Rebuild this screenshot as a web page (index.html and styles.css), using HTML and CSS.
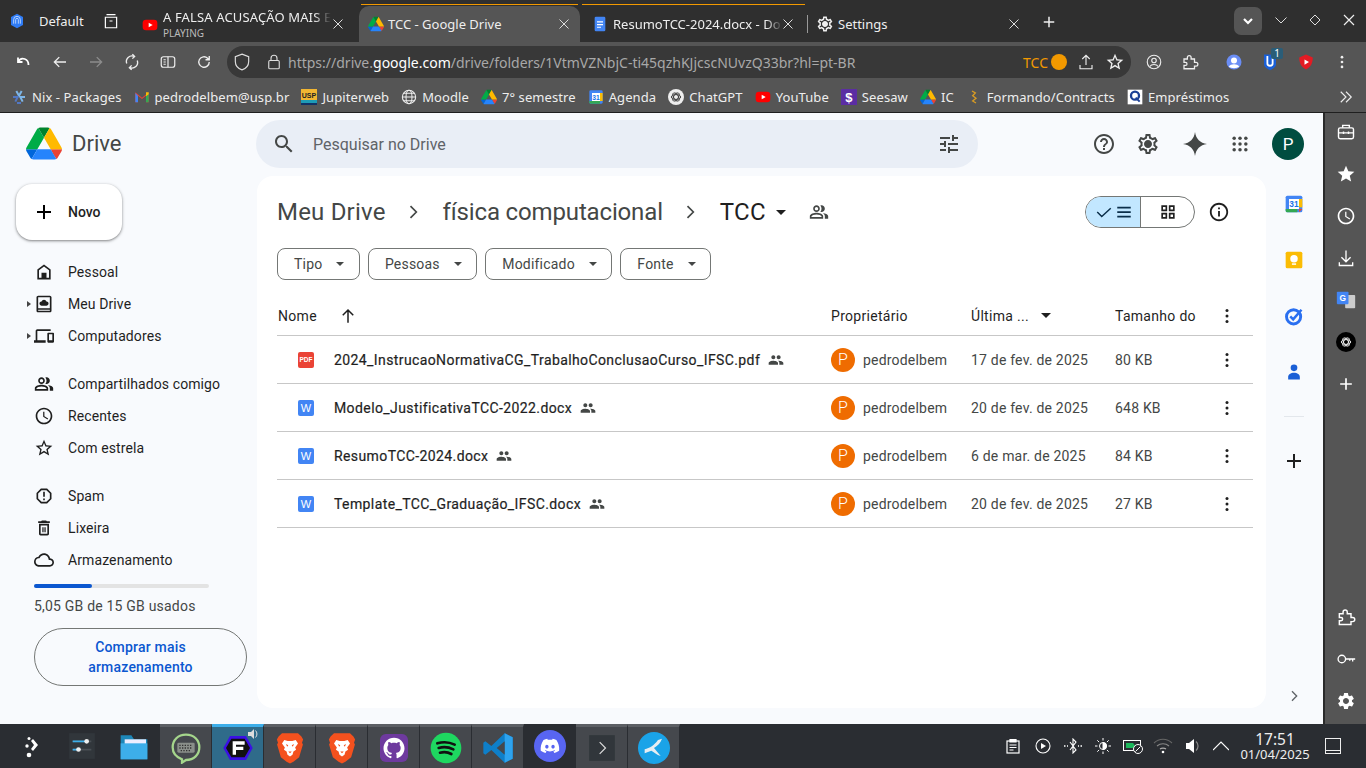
FILE: index.html
```html
<!DOCTYPE html>
<html lang="pt-BR">
<head>
    <meta charset="UTF-8">
    <title>TCC - Google Drive</title>
    <link rel="stylesheet" href="styles.css">
</head>
<body>
    <svg class="sprite" width="0" height="0">
        <symbol id="drive" viewBox="0 0 87.3 78">
            <path d="m6.6 66.85 3.85 6.65c.8 1.4 1.95 2.5 3.3 3.3l13.75-23.8h-27.5c0 1.55.4 3.1 1.2 4.5z" fill="#0066da"/>
            <path d="m43.65 25-13.75-23.8c-1.35.8-2.5 1.9-3.3 3.3l-25.4 44a9.06 9.06 0 0 0 -1.2 4.5h27.5z" fill="#00ac47"/>
            <path d="m73.55 76.8c1.35-.8 2.5-1.9 3.3-3.3l1.6-2.75 7.65-13.25c.8-1.4 1.2-2.95 1.2-4.5h-27.502l5.852 11.5z" fill="#ea4335"/>
            <path d="m43.65 25 13.75-23.8c-1.35-.8-2.9-1.2-4.5-1.2h-18.5c-1.6 0-3.15.45-4.5 1.2z" fill="#00832d"/>
            <path d="m59.8 53h-32.3l-13.75 23.8c1.35.8 2.9 1.2 4.5 1.2h50.8c1.6 0 3.15-.45 4.5-1.2z" fill="#2684fc"/>
            <path d="m73.4 26.5-12.7-22c-.8-1.4-1.95-2.5-3.3-3.3l-13.75 23.8 16.15 28h27.45c0-1.55-.4-3.1-1.2-4.5z" fill="#ffba00"/>
        </symbol>
        <symbol id="yt" viewBox="0 0 24 24"><rect x="1" y="4" width="22" height="16" rx="5" fill="#f00"/><path d="M10 8.5l6 3.5-6 3.5z" fill="#fff"/></symbol>
        <symbol id="close" viewBox="0 0 12 12"><path d="M1.5 1.5l9 9M10.5 1.5l-9 9" fill="none" stroke="currentColor"/></symbol>
        <symbol id="home" viewBox="0 0 24 24"><path d="M12 3L4 9v12h16V9l-8-6zm6 16h-3v-6H9v6H6v-9l6-4.5 6 4.5v9z"/></symbol>
        <symbol id="mydrive" viewBox="0 0 24 24"><path d="M19 2H5c-1.1 0-2 .9-2 2v16c0 1.1.9 2 2 2h14c1.1 0 2-.9 2-2V4c0-1.1-.9-2-2-2zM5 4h14v13H5V4zm0 16v-1h14v1H5z"/><path d="M9 14a2.5 2.5 0 0 1 0-5 3.2 3.2 0 0 1 6 0 2.5 2.5 0 0 1 0 5z"/></symbol>
        <symbol id="computer" viewBox="0 0 24 24"><path d="M4 6h16V4H4c-1.1 0-2 .9-2 2v11H0v3h14v-3H4V6zm19 2h-6c-.55 0-1 .45-1 1v10c0 .55.45 1 1 1h6c.55 0 1-.45 1-1V9c0-.55-.45-1-1-1zm-1 9h-4v-7h4v7z"/></symbol>
        <symbol id="people" viewBox="0 0 24 24"><path d="M16.67 13.13C18.04 14.06 19 15.32 19 17v3h4v-3c0-2.18-3.57-3.47-6.33-3.87zM15 12c2.21 0 4-1.79 4-4s-1.79-4-4-4c-.47 0-.91.1-1.33.24C14.5 5.27 15 6.58 15 8s-.5 2.73-1.33 3.76c.42.14.86.24 1.33.24zM9 12c2.21 0 4-1.79 4-4s-1.79-4-4-4-4 1.79-4 4 1.79 4 4 4zm0-6c1.1 0 2 .9 2 2s-.9 2-2 2-2-.9-2-2 .9-2 2-2zm0 7c-2.67 0-8 1.34-8 4v3h16v-3c0-2.66-5.33-4-8-4zm6 5H3v-.99C3.2 16.29 6.3 15 9 15s5.8 1.29 6 2v1z"/></symbol>
        <symbol id="peoplefill" viewBox="0 0 24 24"><path d="M16 11c1.66 0 2.99-1.34 2.99-3S17.66 5 16 5c-1.66 0-3 1.34-3 3s1.34 3 3 3zm-8 0c1.66 0 2.99-1.34 2.99-3S9.66 5 8 5C6.34 5 5 6.34 5 8s1.34 3 3 3zm0 2c-2.33 0-7 1.17-7 3.5V19h14v-2.5c0-2.33-4.67-3.5-7-3.5zm8 0c-.29 0-.62.02-.97.05 1.16.84 1.97 1.97 1.97 3.45V19h6v-2.5c0-2.33-4.67-3.5-7-3.5z"/></symbol>
        <symbol id="clock" viewBox="0 0 24 24"><path d="M11.99 2C6.47 2 2 6.48 2 12s4.47 10 9.99 10C17.52 22 22 17.52 22 12S17.52 2 11.99 2zM12 20c-4.42 0-8-3.58-8-8s3.58-8 8-8 8 3.58 8 8-3.58 8-8 8zm.5-13H11v6l5.25 3.15.75-1.23-4.5-2.67z"/></symbol>
        <symbol id="star" viewBox="0 0 24 24"><path d="M22 9.24l-7.19-.62L12 2 9.19 8.63 2 9.24l5.46 4.73L5.82 21 12 17.27 18.18 21l-1.63-7.03L22 9.24zM12 15.4l-3.76 2.27 1-4.28-3.32-2.88 4.38-.38L12 6.1l1.71 4.04 4.38.38-3.32 2.88 1 4.28L12 15.4z"/></symbol>
        <symbol id="starfill" viewBox="0 0 24 24"><path d="M12 17.27L18.18 21l-1.64-7.03L22 9.24l-7.19-.61L12 2 9.19 8.63 2 9.24l5.46 4.73L5.82 21z"/></symbol>
        <symbol id="spam" viewBox="0 0 24 24"><path d="M15.73 3H8.27L3 8.27v7.46L8.27 21h7.46L21 15.73V8.27L15.73 3zM19 14.9L14.9 19H9.1L5 14.9V9.1L9.1 5h5.8L19 9.1v5.8zM11 7h2v6h-2zM11 15h2v2h-2z"/></symbol>
        <symbol id="trash" viewBox="0 0 24 24"><path d="M6 19c0 1.1.9 2 2 2h8c1.1 0 2-.9 2-2V7H6v12zM8 9h8v10H8V9zm7.5-5l-1-1h-5l-1 1H5v2h14V4zM10 11h1.5v6H10zM12.5 11H14v6h-1.5z"/></symbol>
        <symbol id="cloud" viewBox="0 0 24 24"><path d="M19.35 10.04C18.67 6.59 15.64 4 12 4 9.11 4 6.6 5.64 5.35 8.04 2.34 8.36 0 10.91 0 14c0 3.31 2.69 6 6 6h13c2.76 0 5-2.24 5-5 0-2.64-2.05-4.78-4.65-4.96zM19 18H6c-2.21 0-4-1.79-4-4 0-2.05 1.53-3.76 3.56-3.97l1.07-.11.5-.95C8.08 7.14 9.94 6 12 6c2.62 0 4.88 1.86 5.39 4.43l.3 1.5 1.53.11c1.56.1 2.78 1.41 2.78 2.96 0 1.65-1.35 3-3 3z"/></symbol>
        <symbol id="search" viewBox="0 0 24 24"><path d="M15.5 14h-.79l-.28-.27C15.41 12.59 16 11.11 16 9.5 16 5.91 13.09 3 9.5 3S3 5.91 3 9.5 5.91 16 9.5 16c1.61 0 3.09-.59 4.23-1.57l.27.28v.79l5 4.99L20.49 19l-4.99-5zm-6 0C7.01 14 5 11.99 5 9.5S7.01 5 9.5 5 14 7.01 14 9.5 11.99 14 9.5 14z"/></symbol>
        <symbol id="tune" viewBox="0 0 24 24"><path d="M3 17v2h6v-2H3zM3 5v2h10V5H3zm10 16v-2h8v-2h-8v-2h-2v6h2zM7 9v2H3v2h4v2h2V9H7zm14 4v-2H11v2h10zm-6-4h2V7h4V5h-4V3h-2v6z"/></symbol>
        <symbol id="help" viewBox="0 0 24 24"><path d="M11 18h2v-2h-2v2zm1-16C6.48 2 2 6.48 2 12s4.48 10 10 10 10-4.48 10-10S17.52 2 12 2zm0 18c-4.41 0-8-3.59-8-8s3.59-8 8-8 8 3.59 8 8-3.59 8-8 8zm0-14c-2.21 0-4 1.79-4 4h2c0-1.1.9-2 2-2s2 .9 2 2c0 2-3 1.75-3 5h2c0-2.25 3-2.5 3-5 0-2.21-1.79-4-4-4z"/></symbol>
        <symbol id="gear" viewBox="0 0 24 24"><path d="M19.43 12.98c.04-.32.07-.64.07-.98 0-.34-.03-.66-.07-.98l2.11-1.65c.19-.15.24-.42.12-.64l-2-3.46c-.09-.16-.26-.25-.44-.25-.06 0-.12.01-.17.03l-2.49 1c-.52-.4-1.08-.73-1.69-.98l-.38-2.65C14.46 2.18 14.25 2 14 2h-4c-.25 0-.46.18-.49.42l-.38 2.65c-.61.25-1.17.59-1.69.98l-2.49-1c-.06-.02-.12-.03-.18-.03-.17 0-.34.09-.43.25l-2 3.46c-.13.22-.07.49.12.64l2.11 1.65c-.04.32-.07.65-.07.98 0 .33.03.66.07.98l-2.11 1.65c-.19.15-.24.42-.12.64l2 3.46c.09.16.26.25.44.25.06 0 .12-.01.17-.03l2.49-1c.52.4 1.08.73 1.69.98l.38 2.65c.03.24.24.42.49.42h4c.25 0 .46-.18.49-.42l.38-2.65c.61-.25 1.17-.59 1.69-.98l2.49 1c.06.02.12.03.18.03.17 0 .34-.09.43-.25l2-3.46c.12-.22.07-.49-.12-.64l-2.11-1.65zm-1.98-1.71c.04.31.05.52.05.73 0 .21-.02.43-.05.73l-.14 1.13.89.7 1.08.84-.7 1.21-1.27-.51-1.04-.42-.9.68c-.43.32-.84.56-1.25.73l-1.06.43-.16 1.13-.2 1.35h-1.4l-.19-1.35-.16-1.13-1.06-.43c-.43-.18-.83-.41-1.23-.71l-.91-.7-1.06.43-1.27.51-.7-1.21 1.08-.84.89-.7-.14-1.13c-.03-.31-.05-.54-.05-.74s.02-.43.05-.73l.14-1.13-.89-.7-1.08-.84.7-1.21 1.27.51 1.04.42.9-.68c.43-.32.84-.56 1.25-.73l1.06-.43.16-1.13.2-1.35h1.39l.19 1.35.16 1.13 1.06.43c.43.18.83.41 1.23.71l.91.7 1.06-.43 1.27-.51.7 1.21-1.07.85-.89.7.14 1.13zM12 8c-2.21 0-4 1.79-4 4s1.79 4 4 4 4-1.79 4-4-1.79-4-4-4z"/></symbol>
        <symbol id="gearfill" viewBox="0 0 24 24"><path d="M19.14 12.94c.04-.3.06-.61.06-.94 0-.32-.02-.64-.07-.94l2.03-1.58c.18-.14.23-.41.12-.61l-1.92-3.32c-.12-.22-.37-.29-.59-.22l-2.39.96c-.5-.38-1.03-.7-1.62-.94l-.36-2.54c-.04-.24-.24-.41-.48-.41h-3.84c-.24 0-.43.17-.47.41l-.36 2.54c-.59.24-1.13.57-1.62.94l-2.39-.96c-.22-.08-.47 0-.59.22L2.74 8.87c-.12.21-.08.47.12.61l2.03 1.58c-.05.3-.09.63-.09.94s.02.64.07.94l-2.03 1.58c-.18.14-.23.41-.12.61l1.92 3.32c.12.22.37.29.59.22l2.39-.96c.5.38 1.03.7 1.62.94l.36 2.54c.05.24.24.41.48.41h3.84c.24 0 .44-.17.47-.41l.36-2.54c.59-.24 1.13-.56 1.62-.94l2.39.96c.22.08.47 0 .59-.22l1.92-3.32c.12-.22.07-.47-.12-.61l-2.01-1.58zM12 15.6c-1.98 0-3.6-1.62-3.6-3.6s1.62-3.6 3.6-3.6 3.6 1.62 3.6 3.6-1.62 3.6-3.6 3.6z"/></symbol>
        <symbol id="info" viewBox="0 0 24 24"><path d="M11 7h2v2h-2zm0 4h2v6h-2zm1-9C6.48 2 2 6.48 2 12s4.48 10 10 10 10-4.48 10-10S17.52 2 12 2zm0 18c-4.41 0-8-3.59-8-8s3.59-8 8-8 8 3.59 8 8-3.59 8-8 8z"/></symbol>
        <symbol id="more" viewBox="0 0 24 24"><circle cx="12" cy="5.5" r="1.8"/><circle cx="12" cy="12" r="1.8"/><circle cx="12" cy="18.5" r="1.8"/></symbol>
        <symbol id="plus" viewBox="0 0 24 24"><path d="M19 13h-6v6h-2v-6H5v-2h6V5h2v6h6z"/></symbol>
        <symbol id="caret" viewBox="0 0 10 5"><path d="M0 0h10L5 5z"/></symbol>
        <symbol id="chev" viewBox="0 0 24 24"><path d="M9 5l7 7-7 7" fill="none" stroke="currentColor" stroke-width="2"/></symbol>
        <symbol id="puzzle" viewBox="0 0 24 24"><path d="M4 8h4.500V6a2.500 2.500 0 0 1 5 0v2H18v4.500h2a2.500 2.500 0 0 1 0 5h-2V21H4v-4.500h2a2 2 0 0 0 0-4H4z" fill="none" stroke="currentColor" stroke-width="1.7"/></symbol>
        <symbol id="knot" viewBox="0 0 24 24">
            <g fill="none" stroke="currentColor" stroke-width="1.3">
                <ellipse cx="12" cy="12" rx="7" ry="3.5"/>
                <ellipse cx="12" cy="12" rx="7" ry="3.5" transform="rotate(60 12 12)"/>
                <ellipse cx="12" cy="12" rx="7" ry="3.5" transform="rotate(120 12 12)"/>
            </g>
        </symbol>
        <symbol id="brave" viewBox="0 0 24 28">
            <path d="M5 1h14l3 3 1.5 2.5-1 3 .8 1.500-3.300 11-5 4-3 1.500-3-1.500-5-4-3.300-11 .8-1.500-1-3L2 4z" fill="#f4511e"/>
            <path d="M7 7l3 .8h4l3-.8 2 3-2.500 3.500.8 2-2.300 1.500-.8 3-2.200 1.500-2.200-1.500-.8-3-2.300-1.500.8-2L5 10z" fill="#fff"/>
            <path d="M8.500 10.500l2 1-1 1.500zM15.500 10.500l-2 1 1 1.500zM10.500 17h3L12 18.500z" fill="#f4511e"/>
        </symbol>
    </svg>

    <header class="tabbar">
        <div class="profile">
            <svg class="ic16" viewBox="0 0 24 24"><path d="M12 1l9 5v12l-9 5-9-5V6z" fill="#2f7cf6"/><path d="M7 16V10a5 5 0 0 1 10 0v6M10 16v-6a2 2 0 0 1 4 0v6" fill="none" stroke="#bcd6ff" stroke-width="1.4"/></svg>
            <span>Default</span>
        </div>
        <div class="archive">
            <svg class="ic18" viewBox="0 0 24 24" fill="none" stroke="#fff" stroke-width="1.6"><path d="M6 3.500h12M4.500 7h15v14h-15zM10 12h4"/></svg>
        </div>
        <div class="tab tab-media">
            <svg class="ic16 tab-icon"><use href="#yt"/></svg>
            <div class="tab-text">
                <span class="fade">A FALSA ACUSAÇÃO MAIS E</span>
                <small>PLAYING</small>
            </div>
            <svg class="tab-close"><use href="#close"/></svg>
        </div>
        <div class="tab tab-active">
            <svg class="ic16 tab-icon"><use href="#drive"/></svg>
            <span class="tab-title">TCC - Google Drive</span>
            <svg class="tab-close"><use href="#close"/></svg>
        </div>
        <div class="tab tab-docs">
            <svg class="ic16 tab-icon" viewBox="0 0 24 24"><rect x="4" y="1" width="16" height="22" rx="2" fill="#4285f4"/><path d="M7.500 8h9v1.800h-9zM7.500 12h9v1.800h-9zM7.500 16h6v1.800h-6z" fill="#fff"/></svg>
            <span class="tab-title fade">ResumoTCC-2024.docx - Do</span>
            <svg class="tab-close"><use href="#close"/></svg>
        </div>
        <div class="tab-sep"></div>
        <div class="tab tab-settings">
            <svg class="ic18 tab-icon settings-gear"><use href="#gear"/></svg>
            <span class="tab-title">Settings</span>
            <svg class="tab-close"><use href="#close"/></svg>
        </div>
        <svg class="newtab"><use href="#plus"/></svg>
        <div class="winctl">
            <div class="tabsearch"><svg viewBox="0 0 12 12" width="12" height="12"><path d="M2 4l4 4 4-4" fill="none" stroke="#fff" stroke-width="2.2"/></svg></div>
            <svg class="winbtn" viewBox="0 0 14 14"><path d="M1.500 4.500L7 10l5.500-5.500" fill="none" stroke="#ddd"/></svg>
            <svg class="winbtn" viewBox="0 0 14 14"><path d="M7 2l5 5-5 5-5-5z" fill="none" stroke="#ddd"/></svg>
            <svg class="winbtn" viewBox="0 0 14 14"><path d="M2 2l10 10M12 2L2 12" fill="none" stroke="#eee" stroke-width="1.2"/></svg>
        </div>
    </header>

    <div class="toolbar">
        <div class="navbtn"><svg class="ic18" viewBox="0 0 24 24" fill="none" stroke="#fff" stroke-width="2.4"><path d="M4 6v6h6M4 12c2-4 6-5 9-4s5 4 5 8"/></svg></div>
        <div class="navbtn"><svg class="ic18" viewBox="0 0 24 24" fill="none" stroke="#eee" stroke-width="1.8"><path d="M20 12H5M11 5.500L4.500 12l6.500 6.500"/></svg></div>
        <div class="navbtn"><svg class="ic18" viewBox="0 0 24 24" fill="none" stroke="#8c8c8c" stroke-width="1.8"><path d="M4 12h15M13 5.500l6.500 6.500-6.500 6.500"/></svg></div>
        <div class="navbtn"><svg class="ic18" viewBox="0 0 24 24" fill="none" stroke="#eee" stroke-width="1.8"><path d="M5 14a7.500 7.500 0 0 1 10-9.500M19 10a7.500 7.500 0 0 1-10 9.500M12.500 1.500l3 3-3 3M11.500 22.500l-3-3 3-3"/></svg></div>
        <div class="navbtn"><svg class="ic18" viewBox="0 0 24 24" fill="none" stroke="#eee" stroke-width="1.6"><rect x="3" y="5" width="18" height="14" rx="3"/><path d="M12 5v14M6 9h3M6 12h3M6 15h3"/></svg></div>
        <div class="navbtn"><svg class="ic18" viewBox="0 0 24 24" fill="none" stroke="#eee" stroke-width="1.8"><path d="M19 12a7 7 0 1 1-2.200-5.100L19 9M19 4v5h-5"/></svg></div>
        <div class="urlbar">
            <svg class="ic20 shield" viewBox="0 0 24 24" fill="none" stroke="#ddd" stroke-width="1.4"><path d="M12 2.500l8 3v6c0 5-3.500 8.500-8 10-4.500-1.500-8-5-8-10v-6z"/></svg>
            <svg class="ic18 lock" viewBox="0 0 24 24" fill="none" stroke="#ddd" stroke-width="1.5"><rect x="5" y="10" width="14" height="11" rx="1.500"/><path d="M8 10V7a4 4 0 0 1 8 0v3"/></svg>
            <span class="url">https://drive.<b>google.com</b>/drive/folders/1VtmVZNbjC-ti45qzhKJjcscNUvzQ33br?hl=pt-BR</span>
            <span class="url-tag">TCC</span>
            <span class="url-dot"></span>
            <svg class="ic18 url-act" viewBox="0 0 24 24" fill="none" stroke="#eee" stroke-width="1.5"><path d="M12 16V3.500M7 8l5-5 5 5M4 16v5h16v-5"/></svg>
            <svg class="ic20 url-act url-star"><use href="#star"/></svg>
        </div>
        <div class="ext-row">
            <svg class="ic18" viewBox="0 0 24 24" fill="none" stroke="#eee" stroke-width="1.5"><circle cx="12" cy="12" r="9"/><circle cx="12" cy="10" r="3"/><path d="M6.500 18c2-3.500 9-3.500 11 0"/></svg>
            <svg class="ic18 ext-puzzle"><use href="#puzzle"/></svg>
            <svg class="ic18 ext-gap" viewBox="0 0 24 24"><circle cx="12" cy="12" r="10" fill="#6a8df5"/><circle cx="12" cy="10" r="4" fill="#fff"/><path d="M5 18c3-4 11-4 14 0-3 3-11 3-14 0z" fill="#fff"/></svg>
            <div class="ext-badge">
                <svg class="ic18" viewBox="0 0 24 24"><path d="M4 2h16v13c0 4-4 6-8 8-4-2-8-4-8-8z" fill="#1a5fd6"/><path d="M8.500 4v10c0 2 1.500 3 3.500 3s3.500-1 3.500-3V4" fill="none" stroke="#fff" stroke-width="2.4"/></svg>
                <span class="badge">1</span>
            </div>
            <svg class="ic18" viewBox="0 0 24 24"><path d="M3 6l9-4 9 4c0 8-3 13-9 16C6 19 3 14 3 6z" fill="#e31b23"/><path d="M10 8.500l6 3.500-6 3.500z" fill="#fff"/></svg>
            <svg class="ic18 ext-more"><use href="#more"/></svg>
        </div>
    </div>

    <nav class="bookmarks">
        <a class="bm"><svg class="ic16" viewBox="0 0 24 24" fill="none" stroke-width="3"><path d="M8 3l4 7 4-7" stroke="#7eb6e8"/><path d="M3 12h7l-3.500 7" stroke="#5277c3"/><path d="M21 12h-7l3.500 7" stroke="#7eb6e8"/><path d="M9 21h6" stroke="#5277c3"/></svg>Nix - Packages</a>
        <a class="bm"><svg class="ic16" viewBox="0 0 24 24"><path d="M2 5l10 8 10-8v15h-4V10l-6 5-6-5v10H2z" fill="#ea4335"/><path d="M2 6v14h4V10z" fill="#4285f4"/><path d="M22 6v14h-4V10z" fill="#34a853"/><path d="M18 5l4 0v3l-4 3z" fill="#fbbc04"/></svg>pedrodelbem@usp.br</a>
        <a class="bm"><svg class="ic16" viewBox="0 0 16 16"><rect width="16" height="16" fill="#f2b632"/><rect y="11" width="16" height="3" fill="#1d9bb5"/><rect y="14" width="16" height="2" fill="#136"/><text x="8" y="8.500" class="usp">USP</text></svg>Jupiterweb</a>
        <a class="bm"><svg class="ic16" viewBox="0 0 24 24" fill="none" stroke="#eee" stroke-width="1.6"><circle cx="12" cy="12" r="10"/><ellipse cx="12" cy="12" rx="4.500" ry="10"/><path d="M2 12h20M4 6.500h16M4 17.500h16"/></svg>Moodle</a>
        <a class="bm"><svg class="ic16"><use href="#drive"/></svg>7° semestre</a>
        <a class="bm"><svg class="ic16" viewBox="0 0 24 24"><rect x="2" y="2" width="20" height="20" rx="2" fill="#4285f4"/><rect x="6" y="6" width="12" height="12" fill="#fff"/><path d="M18 6h4v12h-4z" fill="#fbbc04"/><path d="M2 18h16v4H4a2 2 0 0 1-2-2z" fill="#34a853"/><text x="12" y="16" class="cal">31</text></svg>Agenda</a>
        <a class="bm"><span class="gpt"><svg class="ic16"><use href="#knot"/></svg></span>ChatGPT</a>
        <a class="bm"><svg class="ic16"><use href="#yt"/></svg>YouTube</a>
        <a class="bm"><svg class="ic16" viewBox="0 0 16 16"><rect width="16" height="16" fill="#5b2da3"/><text x="8" y="13" class="seesaw">$</text></svg>Seesaw</a>
        <a class="bm"><svg class="ic16"><use href="#drive"/></svg>IC</a>
        <a class="bm"><svg class="ic16" viewBox="0 0 24 24" fill="none" stroke="#d79b24" stroke-width="2"><path d="M9 3l5 3-4 4 5 4-5 4 5 3"/></svg>Formando/Contracts</a>
        <a class="bm"><svg class="ic16" viewBox="0 0 24 24"><rect x="1" y="1" width="22" height="22" fill="#fff"/><circle cx="12" cy="10" r="6" fill="none" stroke="#1b3f94" stroke-width="3.5"/><path d="M13 13l6 6" stroke="#1b3f94" stroke-width="3"/></svg>Empréstimos</a>
        <svg class="bm-more" viewBox="0 0 16 16" fill="none" stroke="#eee" stroke-width="1.3"><path d="M2 2l6 6-6 6M8 2l6 6-6 6"/></svg>
    </nav>

    <div class="app">
        <aside class="sidebar">
            <div class="logo">
                <svg class="logo-mark"><use href="#drive"/></svg>
                <span>Drive</span>
            </div>
            <button class="new-btn">
                <svg class="ic24"><use href="#plus"/></svg>
                Novo
            </button>
            <ul class="nav">
                <li><svg class="ic20"><use href="#home"/></svg>Pessoal</li>
                <li><i class="arrow"></i><svg class="ic20"><use href="#mydrive"/></svg>Meu Drive</li>
                <li><i class="arrow"></i><svg class="ic20"><use href="#computer"/></svg>Computadores</li>
            </ul>
            <ul class="nav">
                <li><svg class="ic20"><use href="#people"/></svg>Compartilhados comigo</li>
                <li><svg class="ic20"><use href="#clock"/></svg>Recentes</li>
                <li><svg class="ic20"><use href="#star"/></svg>Com estrela</li>
            </ul>
            <ul class="nav">
                <li><svg class="ic20"><use href="#spam"/></svg>Spam</li>
                <li><svg class="ic20"><use href="#trash"/></svg>Lixeira</li>
                <li><svg class="ic20"><use href="#cloud"/></svg>Armazenamento</li>
            </ul>
            <div class="storage">
                <div class="storage-bar"><div class="storage-fill" style="width: 33%"></div></div>
                <p>5,05 GB de 15 GB usados</p>
                <button class="buy-btn">Comprar mais armazenamento</button>
            </div>
        </aside>

        <div class="center">
            <div class="topbar">
                <div class="search">
                    <svg class="ic24"><use href="#search"/></svg>
                    <span>Pesquisar no Drive</span>
                    <svg class="ic24 tune"><use href="#tune"/></svg>
                </div>
                <div class="top-actions">
                    <svg class="ic24"><use href="#help"/></svg>
                    <svg class="ic24"><use href="#gear"/></svg>
                    <svg class="ic24 gem" viewBox="0 0 24 24"><path d="M12 0c1 7 5 11 12 12-7 1-11 5-12 12-1-7-5-11-12-12 7-1 11-5 12-12z"/></svg>
                    <svg class="ic24 apps" viewBox="0 0 24 24"><circle cx="5" cy="5" r="2.1"/><circle cx="12" cy="5" r="2.1"/><circle cx="19" cy="5" r="2.1"/><circle cx="5" cy="12" r="2.1"/><circle cx="12" cy="12" r="2.1"/><circle cx="19" cy="12" r="2.1"/><circle cx="5" cy="19" r="2.1"/><circle cx="12" cy="19" r="2.1"/><circle cx="19" cy="19" r="2.1"/></svg>
                    <div class="account">P</div>
                </div>
            </div>

            <main class="card">
                <div class="crumbs">
                    <span class="crumb-root">Meu Drive</span>
                    <svg class="ic20 crumb-sep"><use href="#chev"/></svg>
                    <span class="crumb-mid">física computacional</span>
                    <svg class="ic20 crumb-sep"><use href="#chev"/></svg>
                    <span class="crumb-last">TCC</span>
                    <svg class="caret-big"><use href="#caret"/></svg>
                    <svg class="ic20 crumb-people"><use href="#people"/></svg>
                    <div class="view-toggle">
                        <div class="view-list">
                            <svg class="ic18" viewBox="0 0 24 24" fill="none" stroke="#0b2f4a" stroke-width="2"><path d="M3 12l6 6L21 7"/></svg>
                            <svg class="ic18" viewBox="0 0 24 24"><path d="M3 5h18v2.200H3zM3 11h18v2.200H3zM3 17h18v2.200H3z" fill="#0b2f4a"/></svg>
                        </div>
                        <div class="view-grid">
                            <svg class="ic20" viewBox="0 0 24 24"><path d="M4 4h7v7H4zm2 2v3h3V6zM13 4h7v7h-7zm2 2v3h3V6zM4 13h7v7H4zm2 2v3h3v-3zM13 13h7v7h-7zm2 2v3h3v-3z" fill="#1f1f1f" fill-rule="evenodd"/></svg>
                        </div>
                    </div>
                    <svg class="ic24 info"><use href="#info"/></svg>
                </div>

                <div class="filters">
                    <button class="chip">Tipo<svg class="caret"><use href="#caret"/></svg></button>
                    <button class="chip">Pessoas<svg class="caret"><use href="#caret"/></svg></button>
                    <button class="chip">Modificado<svg class="caret"><use href="#caret"/></svg></button>
                    <button class="chip">Fonte<svg class="caret"><use href="#caret"/></svg></button>
                </div>

                <div class="row head">
                    <div class="col-name"><span>Nome</span><svg class="ic18 sort" viewBox="0 0 24 24" fill="none" stroke="#1f1f1f" stroke-width="2"><path d="M12 21V4M5 11l7-7 7 7"/></svg></div>
                    <div class="col-owner">Proprietário</div>
                    <div class="col-date">Última ...<svg class="caret date-caret"><use href="#caret"/></svg></div>
                    <div class="col-size">Tamanho do</div>
                    <svg class="col-more"><use href="#more"/></svg>
                </div>

                <div class="row">
                    <div class="col-name"><span class="file-ic pdf">PDF</span><span class="file-name">2024_InstrucaoNormativaCG_TrabalhoConclusaoCurso_IFSC.pdf</span><svg class="shared"><use href="#peoplefill"/></svg></div>
                    <div class="col-owner"><span class="avatar">P</span>pedrodelbem</div>
                    <div class="col-date">17 de fev. de 2025</div>
                    <div class="col-size">80 KB</div>
                    <svg class="col-more"><use href="#more"/></svg>
                </div>
                <div class="row">
                    <div class="col-name"><span class="file-ic word">W</span><span class="file-name">Modelo_JustificativaTCC-2022.docx</span><svg class="shared"><use href="#peoplefill"/></svg></div>
                    <div class="col-owner"><span class="avatar">P</span>pedrodelbem</div>
                    <div class="col-date">20 de fev. de 2025</div>
                    <div class="col-size">648 KB</div>
                    <svg class="col-more"><use href="#more"/></svg>
                </div>
                <div class="row">
                    <div class="col-name"><span class="file-ic word">W</span><span class="file-name">ResumoTCC-2024.docx</span><svg class="shared"><use href="#peoplefill"/></svg></div>
                    <div class="col-owner"><span class="avatar">P</span>pedrodelbem</div>
                    <div class="col-date">6 de mar. de 2025</div>
                    <div class="col-size">84 KB</div>
                    <svg class="col-more"><use href="#more"/></svg>
                </div>
                <div class="row">
                    <div class="col-name"><span class="file-ic word">W</span><span class="file-name">Template_TCC_Graduação_IFSC.docx</span><svg class="shared"><use href="#peoplefill"/></svg></div>
                    <div class="col-owner"><span class="avatar">P</span>pedrodelbem</div>
                    <div class="col-date">20 de fev. de 2025</div>
                    <div class="col-size">27 KB</div>
                    <svg class="col-more"><use href="#more"/></svg>
                </div>
            </main>
        </div>

        <aside class="addons">
            <svg class="addon" viewBox="0 0 24 24"><rect x="2" y="2" width="20" height="20" rx="2" fill="#4285f4"/><rect x="6" y="6" width="12" height="12" fill="#fff"/><path d="M18 6h4v10h-4z" fill="#fbbc04"/><path d="M2 18h14v4H4a2 2 0 0 1-2-2z" fill="#34a853"/><path d="M18 18h4l-4 4z" fill="#ea4335"/><text x="12" y="16" class="cal">31</text></svg>
            <svg class="addon" viewBox="0 0 24 24"><rect x="2" y="2" width="20" height="20" rx="2" fill="#fbbc04"/><circle cx="12" cy="10.500" r="4.500" fill="#fff"/><rect x="9.500" y="16" width="5" height="1.800" fill="#fff"/></svg>
            <svg class="addon" viewBox="0 0 24 24"><circle cx="11.500" cy="13" r="8.500" fill="none" stroke="#2a6ff0" stroke-width="3.5"/><path d="M7.500 12.500l3.500 3.500L21 4.500" fill="none" stroke="#2a6ff0" stroke-width="3"/></svg>
            <svg class="addon" viewBox="0 0 24 24"><circle cx="12" cy="7" r="4" fill="#1a5fd6"/><path d="M5 21v-3c0-3 3-5 7-5s7 2 7 5v3z" fill="#1a5fd6"/></svg>
            <div class="addon-line"></div>
            <svg class="addon-plus"><use href="#plus"/></svg>
            <svg class="addon-next"><use href="#chev"/></svg>
        </aside>

        <aside class="browser-panel">
            <svg class="pn" viewBox="0 0 24 24" fill="none" stroke="#fff" stroke-width="1.7"><rect x="3" y="7" width="18" height="13" rx="2"/><path d="M8 7V4h8v3M3 13h18M9 11.500v3M15 11.500v3"/></svg>
            <svg class="pn pn-fill"><use href="#starfill"/></svg>
            <svg class="pn pn-fill"><use href="#clock"/></svg>
            <svg class="pn" viewBox="0 0 24 24" fill="none" stroke="#fff" stroke-width="1.6"><path d="M12 3v13M6.500 11l5.500 5.500 5.500-5.500M4 17v4h16v-4"/></svg>
            <svg class="pn" viewBox="0 0 24 24"><rect x="11" y="6" width="12" height="16" rx="1" fill="#ccc"/><rect x="1" y="2" width="14" height="15" rx="1" fill="#4285f4"/><text x="8" y="13" class="trans">G</text></svg>
            <span class="pn pn-gpt"><svg class="ic16"><use href="#knot"/></svg></span>
            <svg class="pn pn-fill"><use href="#plus"/></svg>
            <svg class="pn pn-bottom"><use href="#puzzle"/></svg>
            <svg class="pn" viewBox="0 0 24 24" fill="none" stroke="#fff" stroke-width="1.6"><circle cx="7" cy="12" r="4.500"/><path d="M11.500 12H23M20 12v3M16.500 12v2"/></svg>
            <svg class="pn pn-fill"><use href="#gearfill"/></svg>
        </aside>
    </div>

    <footer class="taskbar">
        <div class="launcher">
            <div class="task first"><svg viewBox="0 0 24 24" class="ic24"><path d="M12 5l5 6-5 6-2-2 3-4-3-4z" fill="#fff"/><circle cx="6" cy="12" r="1.7" fill="#fff"/><circle cx="8" cy="4.500" r="1.500" fill="#fff"/><circle cx="8" cy="21" r="2.300" fill="#fff"/></svg></div>
            <div class="task"><svg viewBox="0 0 24 24" class="ic28"><rect x="1" y="1" width="22" height="22" fill="#31363b"/><path d="M4 8h16M4 15h16" stroke="#4a4f55" stroke-width="1.5"/><path d="M4 8h12M4 15h5" stroke="#3daee9" stroke-width="1.5"/><circle cx="16" cy="8" r="2" fill="#eee"/><circle cx="9" cy="15" r="2" fill="#eee"/></svg></div>
            <div class="task"><svg viewBox="0 0 24 24" class="ic32"><path d="M2 4h8l2 3h10v15H2z" fill="#1d87b8"/><rect x="5" y="7" width="16" height="4" fill="#eef"/><path d="M2 10h20v12H2z" fill="#3daee9"/></svg></div>
            <div class="task on"><svg viewBox="0 0 24 24" class="ic32"><path d="M12 2c6 0 10 4 10 9.500S18 21 12 21l-3 2v-2.500C5 19 2 16 2 11.500 2 6 6 2 12 2z" fill="none" stroke="#a5d68c" stroke-width="1.7"/><rect x="5.500" y="8" width="13" height="7.500" rx="1" fill="#8a8f8a"/><path d="M7 10h10M7 12h10M8 14h8" stroke="#333" stroke-dasharray="1 1"/></svg></div>
            <div class="task on active"><svg viewBox="0 0 24 24" class="ic32"><path d="M6 3h12l5 9-5 9H6l-5-9z" fill="#3a10e5"/><path d="M7 5h10l4 7-4 7H7l-4-7z" fill="#111"/><path d="M8 7h9v2.500h-6.500V11H16v2.500h-5.500V17H8z" fill="#fff"/></svg><svg class="sound" viewBox="0 0 12 12"><path d="M1 4h3l3-3v10L4 8H1z" fill="#ddd"/><path d="M8.500 2.500a5 5 0 0 1 0 7" fill="none" stroke="#ddd"/></svg></div>
            <div class="task on"><svg class="ic32"><use href="#brave"/></svg></div>
            <div class="task on"><svg class="ic32"><use href="#brave"/></svg></div>
            <div class="task on"><svg viewBox="0 0 24 24" class="ic28"><rect width="24" height="24" rx="5" fill="#6e3a9e"/><path transform="translate(3 3) scale(.75)" fill="#fff" d="M12 .297c-6.63 0-12 5.373-12 12 0 5.303 3.438 9.8 8.205 11.385.6.113.82-.258.82-.577 0-.285-.01-1.04-.015-2.04-3.338.724-4.042-1.61-4.042-1.61C4.422 18.07 3.633 17.7 3.633 17.7c-1.087-.744.084-.729.084-.729 1.205.084 1.838 1.236 1.838 1.236 1.07 1.835 2.809 1.305 3.495.998.108-.776.417-1.305.76-1.605-2.665-.3-5.466-1.332-5.466-5.93 0-1.31.465-2.38 1.235-3.22-.135-.303-.54-1.523.105-3.176 0 0 1.005-.322 3.3 1.23.96-.267 1.98-.399 3-.405 1.02.006 2.04.138 3 .405 2.28-1.552 3.285-1.23 3.285-1.23.645 1.653.24 2.873.12 3.176.765.84 1.23 1.91 1.23 3.22 0 4.61-2.805 5.625-5.475 5.92.42.36.81 1.096.81 2.22 0 1.606-.015 2.896-.015 3.286 0 .315.21.69.825.57C20.565 22.092 24 17.592 24 12.297c0-6.627-5.373-12-12-12"/></svg></div>
            <div class="task on"><svg viewBox="0 0 24 24" class="ic32"><circle cx="12" cy="12" r="11.500" fill="#1ed760"/><path d="M5.500 8.500c4-1.200 9-1 13 1M6.500 12c3.500-1 7.500-.7 11 1M7.500 15.500c3-.8 6-.5 8.500 1" fill="none" stroke="#111" stroke-width="2" stroke-linecap="round"/></svg></div>
            <div class="task on"><svg viewBox="0 0 24 24" class="ic32"><path d="M17 1l6 3v16l-6 3L7 13.500 2.500 17 1 16V8l1.500-1L7 10.500z" fill="#0e7fc9"/><path d="M17 1l6 3v16l-6 3z" fill="#2ea3ee"/><path d="M17 7l-6 5 6 5z" fill="#45484d"/></svg></div>
            <div class="task"><svg viewBox="0 0 24 24" class="ic32"><circle cx="12" cy="12" r="12" fill="#5865f2"/><path transform="translate(5 5) scale(.58)" fill="#fff" d="M20.317 4.37a19.791 19.791 0 0 0-4.885-1.515.074.074 0 0 0-.079.037c-.21.375-.444.864-.608 1.25a18.27 18.27 0 0 0-5.487 0 12.64 12.64 0 0 0-.617-1.25.077.077 0 0 0-.079-.037A19.736 19.736 0 0 0 3.677 4.37a.07.07 0 0 0-.032.027C.533 9.046-.32 13.58.099 18.057a.082.082 0 0 0 .031.057 19.9 19.9 0 0 0 5.993 3.03.078.078 0 0 0 .084-.028c.462-.63.874-1.295 1.226-1.994a.076.076 0 0 0-.041-.106 13.107 13.107 0 0 1-1.872-.892.077.077 0 0 1-.008-.128 10.2 10.2 0 0 0 .372-.292.074.074 0 0 1 .077-.01c3.928 1.793 8.18 1.793 12.062 0a.074.074 0 0 1 .078.01c.12.098.246.198.373.292a.077.077 0 0 1-.006.127 12.299 12.299 0 0 1-1.873.892.077.077 0 0 0-.041.107c.36.698.772 1.362 1.225 1.993a.076.076 0 0 0 .084.028 19.839 19.839 0 0 0 6.002-3.03.077.077 0 0 0 .032-.054c.5-5.177-.838-9.674-3.549-13.66a.061.061 0 0 0-.031-.03zM8.02 15.33c-1.183 0-2.157-1.085-2.157-2.419 0-1.333.956-2.419 2.157-2.419 1.21 0 2.176 1.096 2.157 2.42 0 1.333-.956 2.418-2.157 2.418zm7.975 0c-1.183 0-2.157-1.085-2.157-2.419 0-1.333.955-2.419 2.157-2.419 1.21 0 2.176 1.096 2.157 2.42 0 1.333-.946 2.418-2.157 2.418z"/></svg></div>
            <div class="task on"><svg viewBox="0 0 24 24" class="ic28"><rect x="1" y="1" width="22" height="22" fill="#31363b"/><path d="M10 7l5 5-5 5" fill="none" stroke="#ddd" stroke-width="1"/></svg></div>
            <div class="task on"><svg viewBox="0 0 24 24" class="ic32"><circle cx="12" cy="12" r="12" fill="#1aa3e8"/><path d="M5 13c4-1 7-3 10-7l3-1c-1 3-3 5-6 7l5 6c-3-1-5-3-7-4l-5 2z" fill="#e6edf2"/></svg></div>
        </div>
        <div class="tray">
            <svg class="tray-ic" viewBox="0 0 16 16" fill="none" stroke="#fff" stroke-width="1.2"><rect x="2" y="3" width="12" height="12"/><path d="M5 1.500h6V4H5z" fill="#fff"/><path d="M4.500 7h7M4.500 9.500h7M4.500 12h4"/></svg>
            <svg class="tray-ic" viewBox="0 0 16 16"><circle cx="8" cy="8" r="7" fill="none" stroke="#fff" stroke-width="1.1"/><path d="M6 5l5 3-5 3z" fill="#fff"/></svg>
            <svg class="tray-ic tray-wide" viewBox="0 0 20 16" fill="none" stroke="#fff" stroke-width="1.1"><path d="M7 4l6 8-3 3V1l3 3-6 8"/><path d="M1 8h1.500M4 8h1M15 8h1M17.500 8H19" stroke-width="1.5"/></svg>
            <svg class="tray-ic" viewBox="0 0 16 16" fill="none" stroke="#fff"><circle cx="8" cy="8" r="3.500"/><path d="M8 4.500a3.500 3.500 0 0 1 0 7z" fill="#fff"/><path d="M8 0v2.500M8 13.500V16M0 8h2.500M13.500 8H16M2.300 2.300l1.800 1.800M11.900 11.900l1.800 1.800M2.300 13.700l1.800-1.800M11.900 4.100l1.800-1.800"/></svg>
            <svg class="tray-ic tray-wide" viewBox="0 0 20 16"><rect x=".5" y="2.500" width="17" height="10" fill="none" stroke="#fff"/><path d="M3 5h7l2 2.500L10 10H3z" fill="#1cb85c"/><circle cx="15" cy="11" r="4.500" fill="#2a2d32" stroke="#fff"/><path d="M12.500 13.500l5-5" stroke="#fff"/></svg>
            <svg class="tray-ic tray-wide" viewBox="0 0 20 16" fill="none" stroke-width="1.1"><path d="M1 5c5-5 13-5 18 0" stroke="#666"/><path d="M4 8c3.500-3 8.500-3 12 0" stroke="#888"/><path d="M7 11c1.500-1.200 4.500-1.200 6 0" stroke="#aaa"/><circle cx="10" cy="14" r="1.300" fill="#fff"/></svg>
            <svg class="tray-ic" viewBox="0 0 16 16"><path d="M1 5h3l5-4v14l-5-4H1z" fill="#fff"/><path d="M11 3.500a6 6 0 0 1 0 9" fill="none" stroke="#888" stroke-width="1.2"/></svg>
            <svg class="tray-ic tray-chevron" viewBox="0 0 16 16" fill="none" stroke="#fff" stroke-width="1.1"><path d="M0 12l8-8 8 8"/></svg>
            <div class="clock-box"><span class="time">17:51</span><span class="date">01/04/2025</span></div>
            <div class="show-desktop"></div>
        </div>
    </footer>
</body>
</html>
```

FILE: styles.css
```css
* {
    box-sizing: border-box;
}

html, body {
    margin: 0;
    height: 768px;
    overflow: hidden;
}

body {
    font-family: 'Noto Sans', sans-serif;
    display: flex;
    flex-direction: column;
    color: #1f1f1f;
}

ul {
    list-style: none;
    margin: 0;
    padding: 0;
}

button {
    font-family: inherit;
    cursor: pointer;
}

svg {
    flex: none;
}

.sprite {
    position: absolute;
}

.ic16 { width: 16px; height: 16px; }
.ic18 { width: 18px; height: 18px; }
.ic20 { width: 20px; height: 20px; }
.ic24 { width: 24px; height: 24px; }
.ic28 { width: 28px; height: 28px; }
.ic32 { width: 32px; height: 32px; }

.cal { font: 700 10px 'Liberation Sans', sans-serif; fill: #1a73e8; text-anchor: middle; }
.usp { font: 700 7px 'Liberation Sans', sans-serif; fill: #222; text-anchor: middle; }
.seesaw { font: 700 13px 'Liberation Sans', sans-serif; fill: #fff; text-anchor: middle; }
.trans { font: 700 10px 'Liberation Sans', sans-serif; fill: #fff; text-anchor: middle; }

/* window tabs */
.tabbar {
    height: 42px;
    background: #2f2f2f;
    display: flex;
    align-items: flex-end;
    color: #eee;
    font-size: 13px;
    flex: none;
}

.profile {
    width: 94px;
    height: 42px;
    padding-left: 9px;
    display: flex;
    align-items: center;
    gap: 14px;
    padding-bottom: 1px;
}

.archive {
    width: 36px;
    height: 42px;
    display: flex;
    align-items: center;
    padding-left: 8px;
}

.tab {
    height: 36px;
    display: flex;
    align-items: center;
    position: relative;
}

.tab-media {
    width: 229px;
    padding: 8px 0 0 12px;
    height: 42px;
}

.tab-media .tab-icon {
    margin-right: 5px;
}

.tab-active {
    width: 221px;
    background: #555;
    border-radius: 10px 10px 0 0;
    padding-left: 9px;
}

.tab-active::before,
.tab-docs::before {
    content: "";
    position: absolute;
    top: -2px;
    left: 2px;
    right: 2px;
    height: 1px;
    background: #f29900;
}

.tab-docs {
    width: 227px;
    padding-left: 12px;
}

.tab-docs .tab-icon {
    margin-right: 5px;
}

.tab-settings {
    width: 222px;
    padding-left: 8px;
}

.settings-gear {
    fill: #eee;
}

.tab-sep {
    width: 1px;
    height: 18px;
    background: #999;
    margin-bottom: 9px;
}

.tab-icon {
    margin-right: 4px;
}

.tab-text {
    display: flex;
    flex-direction: column;
    width: 168px;
    line-height: 16px;
    letter-spacing: 0.14px;
}

.tab-text small {
    font-size: 10px;
    line-height: 16px;
    letter-spacing: 0;
    color: #bbb;
}

.tab-title {
    white-space: nowrap;
}

.fade {
    white-space: nowrap;
    overflow: hidden;
    -webkit-mask-image: linear-gradient(to right, #000 90%, transparent);
    mask-image: linear-gradient(to right, #000 90%, transparent);
}

.tab-docs .tab-title {
    width: 170px;
}

.tab-close {
    position: absolute;
    right: 10px;
    top: 12px;
    width: 12px;
    height: 12px;
    color: #ddd;
}

.tab-media .tab-close {
    top: 18px;
    right: 15px;
}

.tab-docs .tab-close {
    right: 13px;
}

.newtab {
    width: 18px;
    height: 18px;
    fill: #eee;
    margin: 0 0 11px 10px;
}

.winctl {
    margin-left: auto;
    height: 42px;
    display: flex;
    align-items: center;
    padding: 0 10px 0 0;
    gap: 20px;
}

.tabsearch {
    width: 28px;
    height: 28px;
    background: #555;
    border-radius: 7px;
    display: flex;
    align-items: center;
    justify-content: center;
    margin-right: -8px;
    margin-top: -1px;
}

.winbtn {
    width: 14px;
    height: 14px;
    margin-top: -2px;
}

/* address bar */
.toolbar {
    height: 42px;
    background: #555;
    display: flex;
    align-items: center;
    padding: 0 0 2px 6px;
    flex: none;
}

.navbtn {
    width: 36px;
    height: 32px;
    display: flex;
    align-items: center;
    justify-content: center;
}

.urlbar {
    width: 904px;
    height: 32px;
    margin-left: 5px;
    background: #383838;
    border-radius: 16px;
    display: flex;
    align-items: center;
    padding: 0 6px 0 5px;
}

.shield {
    margin-right: 13px;
}

.lock {
    margin-right: 5px;
}

.url {
    font-size: 14px;
    color: #a8a8a8;
    white-space: nowrap;
}

.url b {
    font-weight: 400;
    color: #fff;
}

.url-tag {
    margin-left: auto;
    color: #f29900;
    font-size: 14px;
}

.url-dot {
    width: 16px;
    height: 16px;
    background: #f29900;
    border-radius: 50%;
    margin: 0 10px 0 3px;
}

.url-act {
    margin-right: 10px;
}

.url-star {
    fill: #eee;
    margin-right: 0;
}

.ext-row {
    display: flex;
    align-items: center;
    margin-left: 14px;
    gap: 18px;
}

.ext-puzzle {
    color: #eee;
}

.ext-more {
    fill: #eee;
}

.ext-gap {
    margin-left: 8px;
}

.ext-badge {
    position: relative;
    height: 18px;
}

.badge {
    position: absolute;
    top: -5px;
    right: -4px;
    background: #2a5d78;
    color: #fff;
    font-size: 10px;
    line-height: 11px;
    padding: 0 3px;
    border-radius: 2px;
}

/* bookmarks */
.bookmarks {
    height: 29px;
    background: #555;
    border-bottom: 1px solid #1f1f1f;
    display: flex;
    align-items: center;
    padding: 0 0 3px 11px;
    gap: 12px;
    font-size: 13px;
    letter-spacing: 0.09px;
    color: #eee;
    flex: none;
}

.bm {
    display: flex;
    align-items: center;
    gap: 5px;
    white-space: nowrap;
}

.gpt {
    width: 16px;
    height: 16px;
    background: #eee;
    border-radius: 50%;
    color: #333;
    display: flex;
}

.bm-more {
    width: 14px;
    height: 14px;
    margin-left: auto;
    margin-right: 13px;
}

/* drive */
.app {
    flex: 1;
    min-height: 0;
    display: flex;
    background: #f8fafd;
    font-family: Roboto, sans-serif;
}

.sidebar {
    width: 256px;
    flex: none;
    padding: 14px 9px 0 16px;
    display: flex;
    flex-direction: column;
}

.logo {
    display: flex;
    align-items: center;
    padding-left: 10px;
    gap: 10px;
    font-size: 22px;
    color: #444746;
    height: 33px;
}

.logo-mark {
    width: 36px;
    height: 33px;
}

.new-btn {
    margin-top: 24px;
    width: 106px;
    height: 56px;
    background: #fff;
    border: none;
    border-radius: 16px;
    box-shadow: 0 1px 2px rgba(0, 0, 0, 0.3), 0 1px 3px 1px rgba(0, 0, 0, 0.15);
    display: flex;
    align-items: center;
    padding-left: 16px;
    gap: 12px;
    font-size: 14px;
    font-weight: 500;
    color: #1f1f1f;
}

.nav {
    margin-top: 16px;
}

.nav li {
    height: 32px;
    display: flex;
    align-items: center;
    padding-left: 18px;
    gap: 14px;
    font-size: 14px;
    letter-spacing: 0.1px;
    color: #1f1f1f;
    position: relative;
}

.nav svg {
    fill: #1f1f1f;
}

.arrow {
    position: absolute;
    left: 11px;
    top: 13px;
    border-left: 4px solid #444;
    border-top: 3px solid transparent;
    border-bottom: 3px solid transparent;
}

.storage {
    padding-left: 18px;
    margin-top: 8px;
}

.storage-bar {
    width: 175px;
    height: 4px;
    background: #e3e3e3;
    border-radius: 2px;
}

.storage-fill {
    height: 4px;
    background: #0b57d0;
    border-radius: 2px;
}

.storage p {
    margin: 8px 0 0;
    font-size: 14px;
    line-height: 20px;
    letter-spacing: 0.2px;
    color: #444746;
}

.buy-btn {
    margin-top: 12px;
    width: 213px;
    height: 58px;
    background: transparent;
    border: 1px solid #747775;
    border-radius: 29px;
    color: #0b57d0;
    font-size: 14px;
    font-weight: 500;
    letter-spacing: 0.2px;
    line-height: 20px;
    padding: 0 40px;
}

.center {
    flex: 1;
    min-width: 0;
    display: flex;
    flex-direction: column;
}

.topbar {
    height: 63px;
    padding-top: 7px;
    display: flex;
    flex: none;
}

.search {
    width: 722px;
    flex: none;
    height: 48px;
    background: #e9eef6;
    border-radius: 24px;
    display: flex;
    align-items: center;
    padding: 0 17px 0 16px;
    gap: 17px;
    font-size: 16px;
    color: #5f6368;
}

.search svg {
    fill: #444746;
}

.tune {
    margin-left: auto;
}

.top-actions {
    flex: 1;
    display: flex;
    align-items: center;
    height: 48px;
    padding-left: 114px;
    gap: 20px;
}

.top-actions svg {
    fill: #444746;
}

.top-actions .gem {
    margin-left: 3px;
    margin-right: 1px;
}

.top-actions .apps {
    width: 20px;
    height: 20px;
    margin-left: 2px;
}

.account {
    width: 32px;
    height: 32px;
    margin-left: 2px;
    border-radius: 50%;
    background: #004d40;
    color: #fff;
    font-size: 17px;
    display: flex;
    align-items: center;
    justify-content: center;
}

.card {
    margin: 0 0 16px 1px;
    flex: 1;
    background: #fff;
    border-radius: 16px;
    padding: 0 13px 0 20px;
}

.crumbs {
    height: 72px;
    display: flex;
    align-items: center;
    font-size: 24px;
    color: #444746;
}

.crumb-root {
    letter-spacing: 0.2px;
}

.crumb-mid {
    letter-spacing: -0.15px;
}

.crumb-sep {
    margin: 0 20px 0 17px;
    color: #444746;
}

.crumb-last {
    color: #1f1f1f;
    letter-spacing: 0.3px;
}

.caret-big {
    width: 10px;
    height: 5px;
    margin-left: 10px;
    fill: #1f1f1f;
}

.crumb-people {
    margin-left: 23px;
    fill: #444746;
}

.view-toggle {
    margin-left: auto;
    margin-right: 13px;
    width: 110px;
    height: 32px;
    border: 1px solid #747775;
    border-radius: 16px;
    display: flex;
    overflow: hidden;
}

.view-list {
    width: 55px;
    background: #c2e7ff;
    border-right: 1px solid #747775;
    display: flex;
    align-items: center;
    justify-content: center;
    gap: 2px;
    padding-left: 1px;
}

.view-grid {
    flex: 1;
    display: flex;
    align-items: center;
    justify-content: center;
}

.info {
    fill: #1f1f1f;
    width: 22px;
    height: 22px;
    margin-right: 23px;
}

.filters {
    display: flex;
    gap: 8px;
}

.chip {
    height: 32px;
    display: flex;
    align-items: center;
    background: #fff;
    border: 1px solid #747775;
    border-radius: 8px;
    padding: 0 14.5px 0 16px;
    font-family: Roboto, sans-serif;
    font-size: 14px;
    letter-spacing: 0.2px;
    color: #444746;
}

.caret {
    width: 8px;
    height: 4px;
    margin-left: 14px;
    fill: #444746;
}

.row {
    height: 48px;
    display: flex;
    align-items: center;
    border-bottom: 1px solid #c7c7c7;
    font-size: 14px;
    letter-spacing: 0.2px;
    color: #444746;
    white-space: nowrap;
}

.row.head {
    margin-top: 16px;
    height: 40px;
    color: #1f1f1f;
    letter-spacing: 0.3px;
}

.col-name {
    width: 554px;
    display: flex;
    align-items: center;
    color: #1f1f1f;
    padding-left: 1px;
}

.sort {
    margin-left: 22px;
}

.file-ic {
    width: 16px;
    height: 16px;
    margin: 0 20px 0 20px;
    border-radius: 2px;
    color: #fff;
    display: flex;
    align-items: center;
    justify-content: center;
    letter-spacing: 0;
    font-family: 'Liberation Sans', sans-serif;
}

.pdf {
    background: #ea4335;
    font-size: 6.5px;
    font-weight: 700;
}

.word {
    background: #4285f4;
    font-size: 11px;
}

.file-name {
    letter-spacing: 0.4px;
    -webkit-text-stroke: 0.2px #1f1f1f;
}

.shared {
    width: 16px;
    height: 16px;
    margin-left: 8px;
    fill: #444746;
}

.col-owner {
    width: 140px;
    display: flex;
    align-items: center;
    gap: 8px;
}

.avatar {
    width: 24px;
    height: 24px;
    border-radius: 50%;
    background: #ef6c00;
    color: #fff;
    font-size: 16px;
    font-weight: 300;
    letter-spacing: 0;
    display: flex;
    align-items: center;
    justify-content: center;
}

.col-date {
    width: 144px;
    display: flex;
    align-items: center;
}

.date-caret {
    width: 10px;
    height: 5px;
    margin-left: 12px;
    fill: #1f1f1f;
}

.col-size {
    width: 102px;
}

.col-more {
    fill: #1f1f1f;
    width: 20px;
    height: 20px;
}

.addons {
    width: 57px;
    flex: none;
    display: flex;
    flex-direction: column;
    align-items: center;
    padding: 81px 1px 0 0;
}

.addon {
    width: 20px;
    height: 20px;
    margin-bottom: 36px;
}

.addon-line {
    width: 20px;
    height: 1px;
    background: #e3e7ec;
    margin-top: -2px;
}

.addon-plus {
    width: 24px;
    height: 24px;
    margin-top: 32px;
    fill: #1f1f1f;
}

.addon-next {
    width: 16px;
    height: 16px;
    margin-top: auto;
    margin-bottom: 20px;
    color: #5f6368;
}

.browser-panel {
    width: 43px;
    flex: none;
    background: #555;
    border-left: 2px solid #2a2a2a;
    display: flex;
    flex-direction: column;
    align-items: center;
    padding-top: 9px;
    gap: 22px;
}

.pn {
    width: 20px;
    height: 20px;
    color: #fff;
}

.pn-fill {
    fill: #fff;
}

.pn-gpt {
    background: #000;
    border-radius: 50%;
    display: flex;
    align-items: center;
    justify-content: center;
}

.pn-bottom {
    margin-top: auto;
}

.browser-panel .pn:last-child {
    margin-bottom: 13px;
}

/* desktop panel */
.taskbar {
    height: 44px;
    flex: none;
    background: #2a2d32;
    display: flex;
    font-family: 'Noto Sans', sans-serif;
}

.launcher {
    display: flex;
    padding-left: 10px;
}

.task {
    width: 52px;
    height: 44px;
    display: flex;
    align-items: center;
    justify-content: center;
    position: relative;
}

.task.first {
    width: 46px;
}

.task.on {
    background: #45484d;
    border-top: 3px solid #5c5f64;
    border-right: 1px solid #2a2d32;
}

.task.active {
    background: #2f6b8a;
    border-top-color: #3daee9;
}

.sound {
    position: absolute;
    right: 4px;
    top: 1px;
    width: 12px;
    height: 12px;
}

.tray {
    margin-left: auto;
    display: flex;
    align-items: center;
    padding-right: 25px;
}

.tray-ic {
    width: 16px;
    height: 16px;
    margin-right: 14px;
}

.tray-wide {
    width: 20px;
    margin: 0 12px 0 -2px;
}

.tray-chevron {
    margin-left: -2px;
}

.clock-box {
    width: 72px;
    margin: 0 14px 0 -4px;
    display: flex;
    flex-direction: column;
    align-items: center;
    color: #eee;
    padding-top: 1px;
}

.time {
    font-size: 15.5px;
    line-height: 16px;
}

.date {
    font-size: 13px;
    line-height: 15px;
}

.show-desktop {
    width: 16px;
    height: 16px;
    border: 1.5px solid #eee;
    background: linear-gradient(#eee, #eee) 0 calc(100% - 2px) / 100% 1px no-repeat;
}
```
